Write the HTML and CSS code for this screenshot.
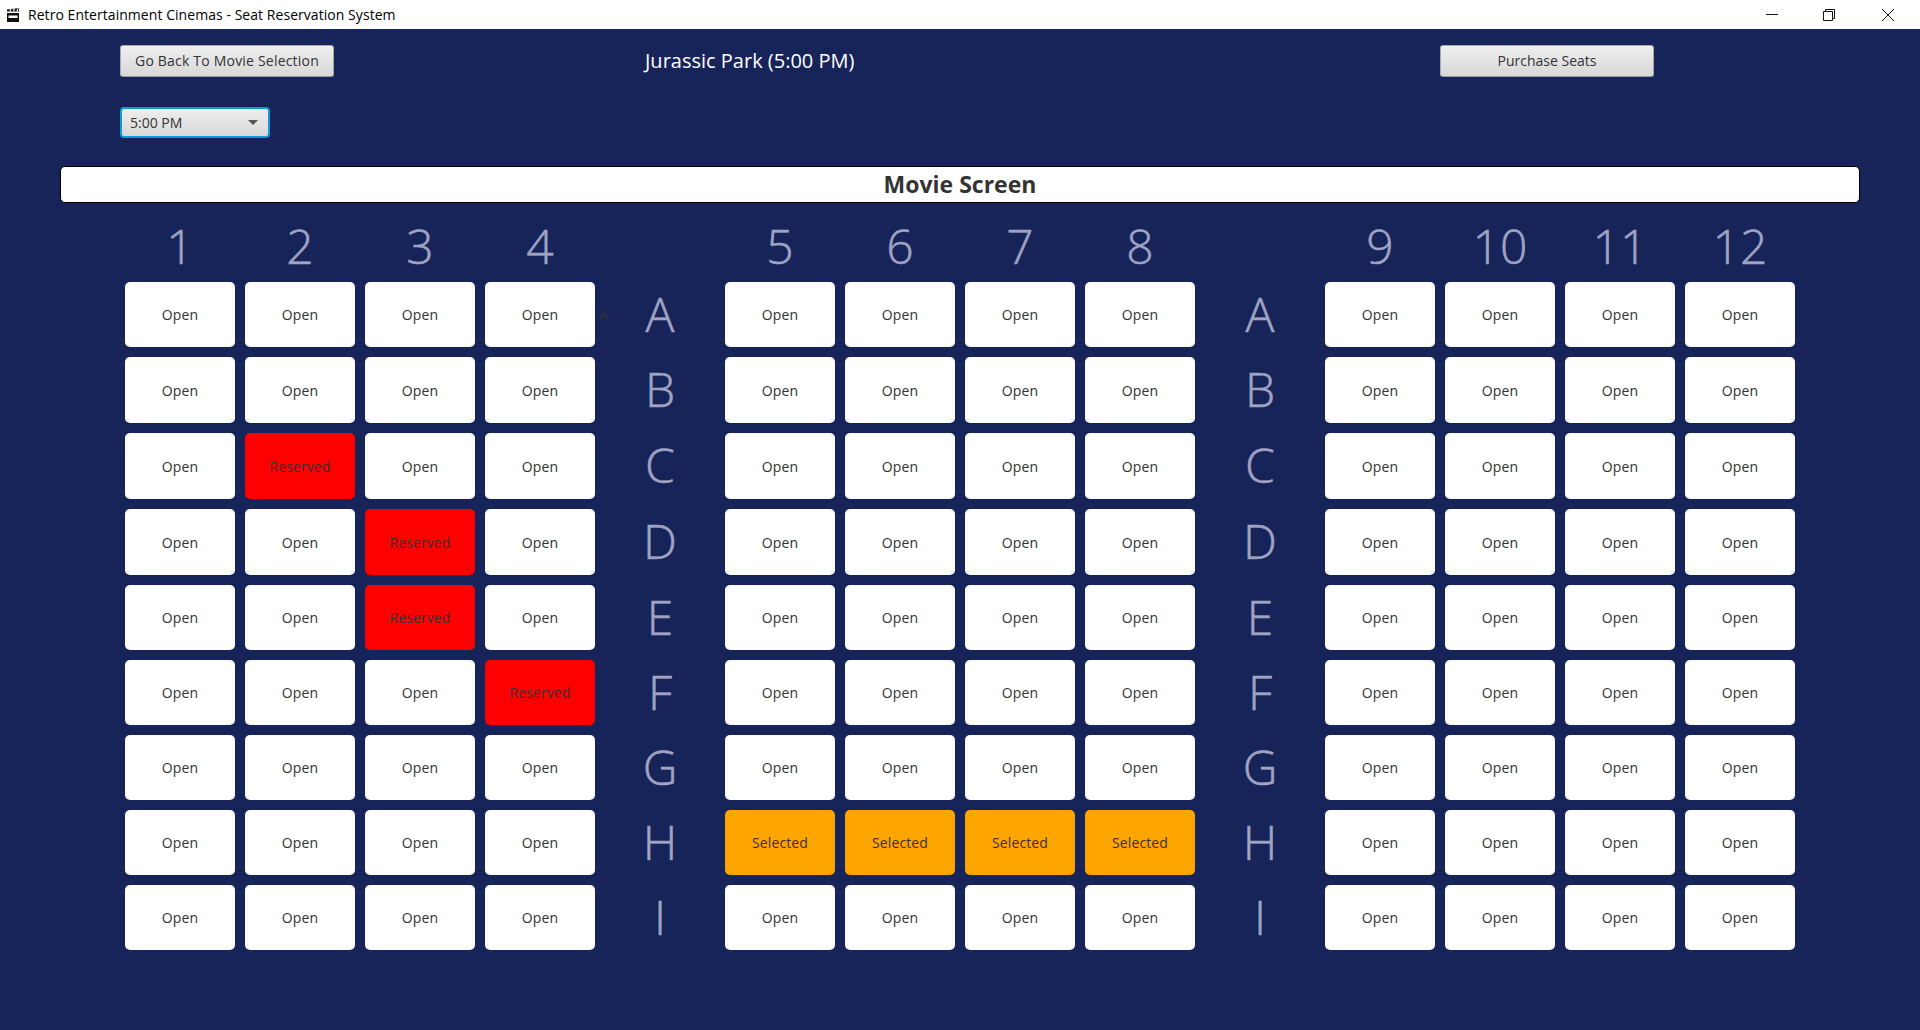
FILE: index.html
```html
<!DOCTYPE html>
<html lang="en">
<head>
<meta charset="utf-8">
<title>Retro Entertainment Cinemas - Seat Reservation System</title>
<link rel="stylesheet" href="styles.css">
</head>
<body>
<header class="titlebar">
  <svg class="app-icon" width="14" height="16" viewBox="0 0 14 16"><path d="M1 6h12v9H1z" fill="#111"/><path d="M2.5 8.5h9v2.5h-9z" fill="#fff"/><path d="M1 2.6L13 1v3.6H1z" fill="#111"/><path d="M4 4.4l1-3M7.5 4.4l1-3M11 4.4l1-3" stroke="#fff" stroke-width="1.2"/></svg>
  <span class="window-title">Retro Entertainment Cinemas - Seat Reservation System</span>
  <div class="window-controls">
    <svg class="ctl" width="14" height="14" viewBox="0 0 14 14"><path d="M1 6.5h12" stroke="#111" fill="none"/></svg>
    <svg class="ctl" width="14" height="14" viewBox="0 0 14 14"><path d="M1.5 3.5h9v9h-9zM3.5 3.5v-2h9v9h-2" stroke="#111" fill="none"/></svg>
    <svg class="ctl" width="14" height="14" viewBox="0 0 14 14"><path d="M1 1l12 12M13 1L1 13" stroke="#111" fill="none"/></svg>
  </div>
</header>
<main class="app">
  <div class="toolbar">
    <button class="btn">Go Back To Movie Selection</button>
    <h1 class="movie-title">Jurassic Park (5:00 PM)</h1>
    <button class="btn btn-end">Purchase Seats</button>
  </div>
  <div class="select-row">
    <div class="time-select"><span>5:00 PM</span><i class="arrow"></i></div>
  </div>
  <div class="screen">Movie Screen</div>
  <div class="seats">
    <div class="num">1</div><div class="num">2</div><div class="num">3</div><div class="num">4</div><div></div>
    <div class="num">5</div><div class="num">6</div><div class="num">7</div><div class="num">8</div><div></div>
    <div class="num">9</div><div class="num">10</div><div class="num">11</div><div class="num">12</div>

    <div class="seat">Open</div><div class="seat">Open</div><div class="seat">Open</div><div class="seat">Open</div>
    <div class="row-label"><span class="stray">A</span>A</div>
    <div class="seat">Open</div><div class="seat">Open</div><div class="seat">Open</div><div class="seat">Open</div>
    <div class="row-label">A</div>
    <div class="seat">Open</div><div class="seat">Open</div><div class="seat">Open</div><div class="seat">Open</div>

    <div class="seat">Open</div><div class="seat">Open</div><div class="seat">Open</div><div class="seat">Open</div>
    <div class="row-label">B</div>
    <div class="seat">Open</div><div class="seat">Open</div><div class="seat">Open</div><div class="seat">Open</div>
    <div class="row-label">B</div>
    <div class="seat">Open</div><div class="seat">Open</div><div class="seat">Open</div><div class="seat">Open</div>

    <div class="seat">Open</div><div class="seat reserved">Reserved</div><div class="seat">Open</div><div class="seat">Open</div>
    <div class="row-label">C</div>
    <div class="seat">Open</div><div class="seat">Open</div><div class="seat">Open</div><div class="seat">Open</div>
    <div class="row-label">C</div>
    <div class="seat">Open</div><div class="seat">Open</div><div class="seat">Open</div><div class="seat">Open</div>

    <div class="seat">Open</div><div class="seat">Open</div><div class="seat reserved">Reserved</div><div class="seat">Open</div>
    <div class="row-label">D</div>
    <div class="seat">Open</div><div class="seat">Open</div><div class="seat">Open</div><div class="seat">Open</div>
    <div class="row-label">D</div>
    <div class="seat">Open</div><div class="seat">Open</div><div class="seat">Open</div><div class="seat">Open</div>

    <div class="seat">Open</div><div class="seat">Open</div><div class="seat reserved">Reserved</div><div class="seat">Open</div>
    <div class="row-label">E</div>
    <div class="seat">Open</div><div class="seat">Open</div><div class="seat">Open</div><div class="seat">Open</div>
    <div class="row-label">E</div>
    <div class="seat">Open</div><div class="seat">Open</div><div class="seat">Open</div><div class="seat">Open</div>

    <div class="seat">Open</div><div class="seat">Open</div><div class="seat">Open</div><div class="seat reserved">Reserved</div>
    <div class="row-label">F</div>
    <div class="seat">Open</div><div class="seat">Open</div><div class="seat">Open</div><div class="seat">Open</div>
    <div class="row-label">F</div>
    <div class="seat">Open</div><div class="seat">Open</div><div class="seat">Open</div><div class="seat">Open</div>

    <div class="seat">Open</div><div class="seat">Open</div><div class="seat">Open</div><div class="seat">Open</div>
    <div class="row-label">G</div>
    <div class="seat">Open</div><div class="seat">Open</div><div class="seat">Open</div><div class="seat">Open</div>
    <div class="row-label">G</div>
    <div class="seat">Open</div><div class="seat">Open</div><div class="seat">Open</div><div class="seat">Open</div>

    <div class="seat">Open</div><div class="seat">Open</div><div class="seat">Open</div><div class="seat">Open</div>
    <div class="row-label">H</div>
    <div class="seat selected">Selected</div><div class="seat selected">Selected</div><div class="seat selected">Selected</div><div class="seat selected">Selected</div>
    <div class="row-label">H</div>
    <div class="seat">Open</div><div class="seat">Open</div><div class="seat">Open</div><div class="seat">Open</div>

    <div class="seat">Open</div><div class="seat">Open</div><div class="seat">Open</div><div class="seat">Open</div>
    <div class="row-label">I</div>
    <div class="seat">Open</div><div class="seat">Open</div><div class="seat">Open</div><div class="seat">Open</div>
    <div class="row-label">I</div>
    <div class="seat">Open</div><div class="seat">Open</div><div class="seat">Open</div><div class="seat">Open</div>
  </div>
</main>
</body>
</html>
```
FILE: styles.css
```css
* { box-sizing: border-box; }
html, body { margin: 0; height: 100%; overflow: hidden; }
body { font-family: "Open Sans", "Noto Sans", sans-serif; background: #172459; color: #333; }

.titlebar { height: 29px; background: #fff; display: flex; align-items: center; padding-left: 6px; }
.app-icon { flex: none; }
.window-title { margin-left: 8px; font-size: 14px; letter-spacing: 0.05px; color: #000; }
.window-controls { margin-left: auto; display: flex; gap: 44px; padding-right: 25px; }
.ctl:nth-child(2) { margin: 0 1px 0 -1px; }

.app { height: 1001px; background: #172459; }
.toolbar { display: flex; align-items: center; padding: 16px 266px 0 120px; }
.btn { width: 214px; height: 32px; padding: 0 0 2px; border: 1px solid #a9a9a9; border-bottom-color: #999; border-radius: 3px; background: linear-gradient(#eee, #d8d8d8); font: 14px "Open Sans", sans-serif; letter-spacing: 0.2px; color: #333; }
.movie-title { margin: 0 0 2px 311px; font-size: 20px; font-weight: 400; color: #fff; }
.btn-end { margin-left: auto; letter-spacing: 0; }

.select-row { padding: 30px 0 0 120px; }
.time-select { width: 150px; height: 31px; display: flex; align-items: center; justify-content: space-between; padding: 0 10px 0 8px; border: 2px solid #0c9bd3; border-radius: 4px; background: linear-gradient(#eee, #d8d8d8); font-size: 14px; color: #333; }
.arrow { width: 0; height: 0; border-left: 5px solid transparent; border-right: 5px solid transparent; border-top: 5px solid #555; }

.screen { margin: 28px 60px 0; height: 37px; padding-bottom: 2px; display: flex; align-items: center; justify-content: center; background: #fff; border: 1px solid #000; border-radius: 5px; font-size: 23px; font-weight: 700; color: #333; }

.seats { display: grid; padding-left: 125px; grid-template-columns: repeat(14, 110px); grid-template-rows: 69px 65px 66px 66px 66px 65px 65px 65px 65px 65px; gap: 10px; }
.num, .row-label { position: relative; display: flex; align-items: center; justify-content: center; font-size: 48px; font-weight: 300; -webkit-text-stroke: 0.5px #a0a3c2; color: #a0a3c2; line-height: 1; }
.num { padding-top: 17px; }
.row-label { padding-bottom: 2px; }
.seat { display: flex; align-items: center; justify-content: center; background: #fff; border-radius: 5px; font-size: 14px; letter-spacing: 0.1px; color: #333; }
.reserved { background: #f00; }
.selected { background: #ffa500; }
.stray { position: absolute; left: -5px; top: 50%; transform: translateY(-50%); font-size: 14px; font-weight: 400; -webkit-text-stroke: 0; color: #333; }
```
